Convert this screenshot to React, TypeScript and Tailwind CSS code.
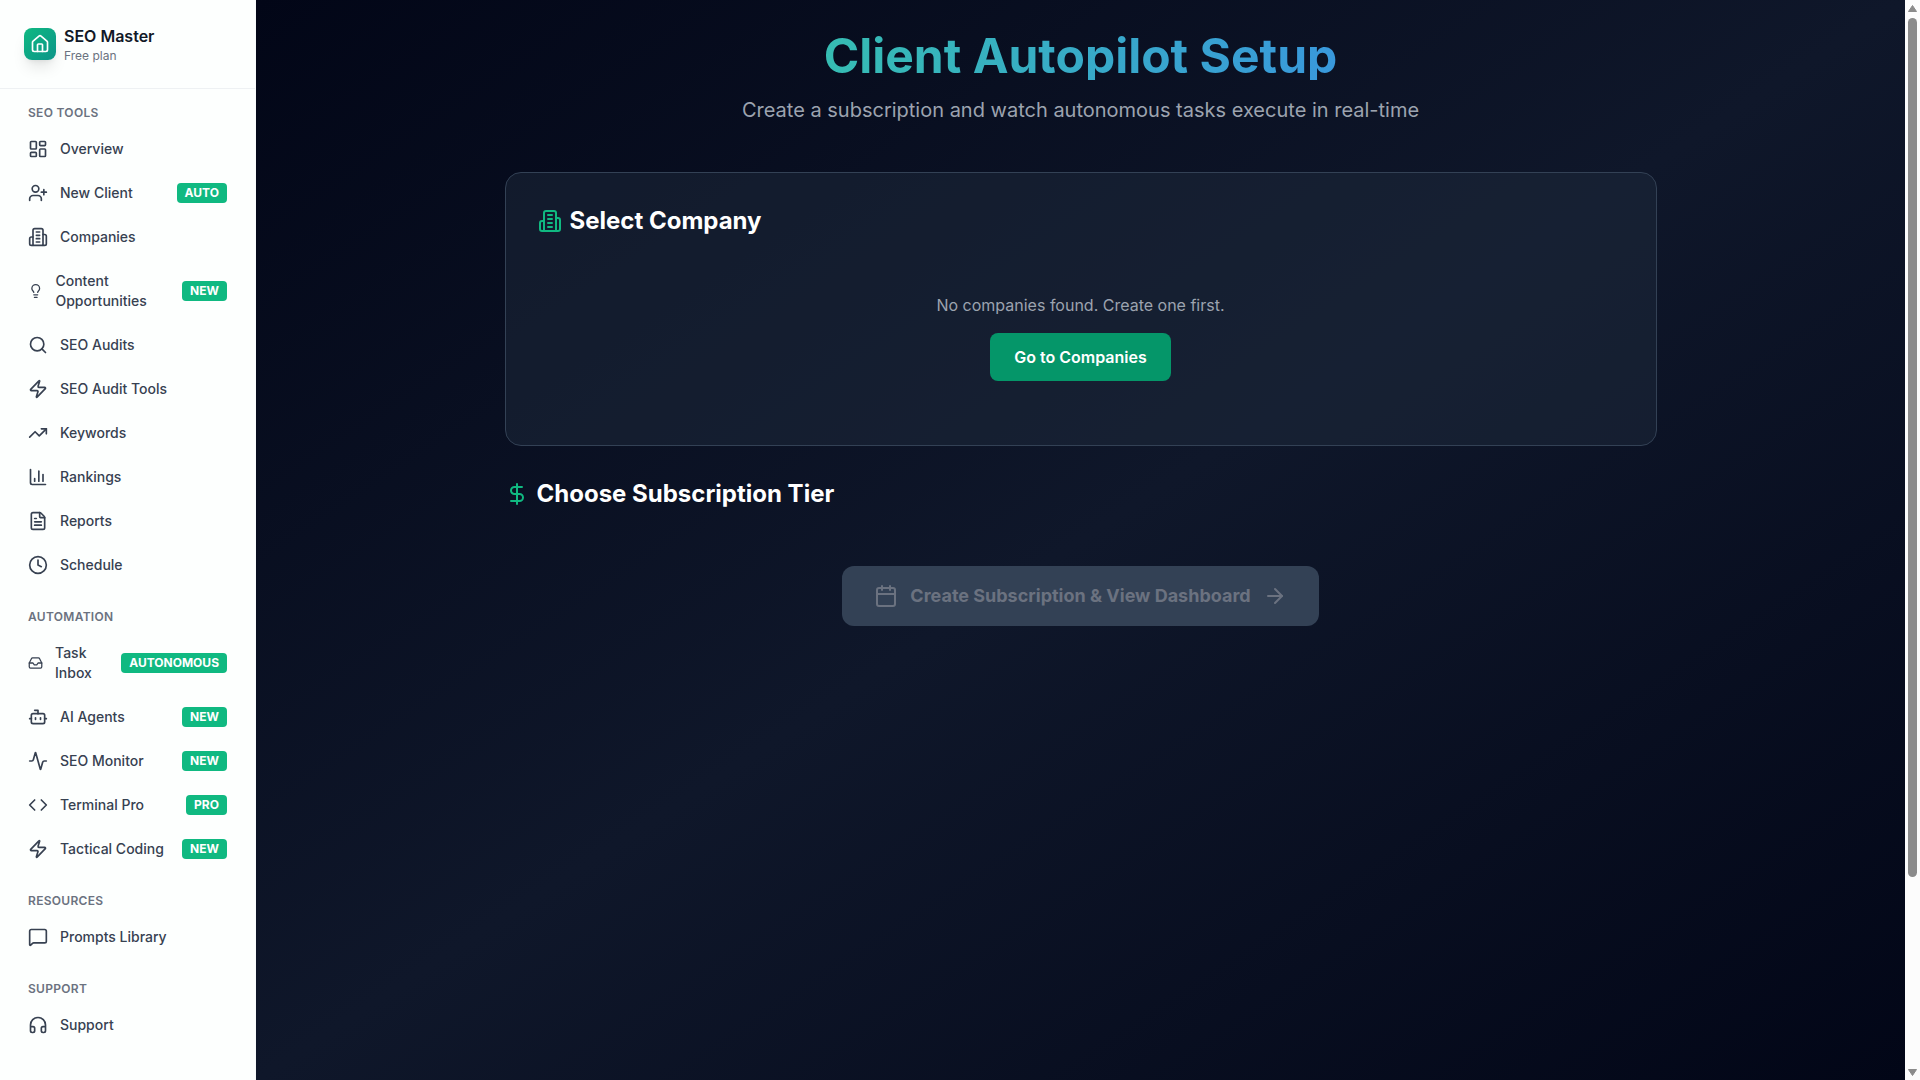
import React from "react";
import {
  Activity,
  ArrowRight,
  Bot,
  Calendar,
  ChartColumn,
  Clock,
  Code,
  DollarSign,
  FileText,
  Headphones,
  House,
  Inbox,
  LayoutDashboard,
  Lightbulb,
  MessageSquare,
  Search,
  TrendingUp,
  UserPlus,
  Zap,
} from "lucide-react";

type IconType = React.ComponentType<{ className?: string }>;

function Building({ className }: { className?: string }) {
  return (
    <svg
      className={className}
      width="24"
      height="24"
      viewBox="0 0 24 24"
      fill="none"
      stroke="currentColor"
      strokeWidth="2"
      strokeLinecap="round"
      strokeLinejoin="round"
      aria-hidden="true"
    >
      <path d="M6 22V4a2 2 0 0 1 2-2h8a2 2 0 0 1 2 2v18Z" />
      <path d="M6 12H4a2 2 0 0 0-2 2v6a2 2 0 0 0 2 2h2" />
      <path d="M18 9h2a2 2 0 0 1 2 2v9a2 2 0 0 1-2 2h-2" />
      <path d="M10 6h4" />
      <path d="M10 10h4" />
      <path d="M10 14h4" />
      <path d="M10 18h4" />
    </svg>
  );
}

type Item = { label: string; icon: IconType; badge?: string };

const sections: { title: string; items: Item[] }[] = [
  {
    title: "SEO Tools",
    items: [
      { label: "Overview", icon: LayoutDashboard },
      { label: "New Client", icon: UserPlus, badge: "AUTO" },
      { label: "Companies", icon: Building },
      { label: "Content Opportunities", icon: Lightbulb, badge: "NEW" },
      { label: "SEO Audits", icon: Search },
      { label: "SEO Audit Tools", icon: Zap },
      { label: "Keywords", icon: TrendingUp },
      { label: "Rankings", icon: ChartColumn },
      { label: "Reports", icon: FileText },
      { label: "Schedule", icon: Clock },
    ],
  },
  {
    title: "Automation",
    items: [
      { label: "Task Inbox", icon: Inbox, badge: "AUTONOMOUS" },
      { label: "AI Agents", icon: Bot, badge: "NEW" },
      { label: "SEO Monitor", icon: Activity, badge: "NEW" },
      { label: "Terminal Pro", icon: Code, badge: "PRO" },
      { label: "Tactical Coding", icon: Zap, badge: "NEW" },
    ],
  },
  { title: "Resources", items: [{ label: "Prompts Library", icon: MessageSquare }] },
  { title: "Support", items: [{ label: "Support", icon: Headphones }] },
];

function Sidebar() {
  return (
    <aside className="w-64 shrink-0 border-r border-[#f9fbfb] bg-[#fdfffe]">
      <div className="flex items-center gap-2 border-b border-[#eef1f3] p-6">
        <div className="flex size-8 items-center justify-center rounded-lg bg-linear-to-br from-[#10b981] to-[#0d9488] shadow-lg">
          <House className="size-5 text-white" />
        </div>
        <div>
          <p className="text-base font-semibold text-[#111827]">SEO Master</p>
          <p className="text-xs text-[#6b7280]">Free plan</p>
        </div>
      </div>
      <nav className="flex flex-col gap-6 px-4 pt-4" aria-label="Main">
        {sections.map((section) => (
          <section key={section.title}>
            <h2 className="mb-2 px-3 text-xs font-semibold uppercase tracking-wide text-[#6b7280]">
              {section.title}
            </h2>
            <ul className="flex flex-col gap-1">
              {section.items.map(({ label, icon: Icon, badge }) => (
                <li key={label}>
                  <a
                    href="#"
                    className="flex items-center gap-3 rounded-lg px-3 py-[10px] text-sm font-medium text-[#374151]"
                  >
                    <Icon className="size-5" />
                    <span>{label}</span>
                    {badge && (
                      <span className="ml-auto rounded bg-[#10b981] px-2 py-0.5 text-xs font-bold text-white">
                        {badge}
                      </span>
                    )}
                  </a>
                </li>
              ))}
            </ul>
          </section>
        ))}
      </nav>
    </aside>
  );
}

function Scrollbar() {
  return (
    <div className="flex w-[15px] shrink-0 flex-col items-center bg-[#fcfcfc] py-1" aria-hidden="true">
      <svg className="mt-px h-[7px] w-[9px] shrink-0" viewBox="0 0 9 7">
        <path d="M4.5 0.5 8.5 6.5H0.5Z" fill="#8b8b8b" stroke="#8b8b8b" strokeLinejoin="round" />
      </svg>
      <div className="mt-1.5 flex grow flex-col pb-5">
        <div className="w-[9px] grow-[859] rounded-full bg-[#8b8b8b]" />
        <div className="grow-[172]" />
      </div>
      <svg className="h-[7px] w-[9px] shrink-0" viewBox="0 0 9 7">
        <path d="M4.5 6.5 8.5 0.5H0.5Z" fill="#8b8b8b" stroke="#8b8b8b" strokeLinejoin="round" />
      </svg>
    </div>
  );
}

export default function App() {
  return (
    <div className="flex min-h-screen font-['Inter',sans-serif]">
      <Sidebar />
      <main className="grow bg-linear-to-br/srgb from-[#020617] via-[#0f172a] to-[#020617] py-8">
        <div className="mx-auto max-w-6xl">
          <header className="mb-12 text-center">
            <h1 className="mb-4 bg-linear-to-r/srgb from-[#34d399] to-[#3b82f6] bg-clip-text text-5xl font-bold text-transparent">
              Client Autopilot Setup
            </h1>
            <p className="text-xl text-[#9ca3af]">
              Create a subscription and watch autonomous tasks execute in real-time
            </p>
          </header>

          <section className="mb-8 rounded-2xl border border-[#334155] bg-[#1e293b]/50 p-8">
            <h2 className="mb-6 flex items-center gap-2 text-2xl font-bold text-white">
              <Building className="size-6 text-[#10b981]" />
              Select Company
            </h2>
            <div className="py-8 text-center">
              <p className="mb-4 text-base text-[#9ca3af]">No companies found. Create one first.</p>
              <button type="button" className="rounded-lg bg-[#059669] px-6 py-3 font-semibold text-white">
                Go to Companies
              </button>
            </div>
          </section>

          <section className="pb-14">
            <h2 className="flex items-center gap-2 text-2xl font-bold text-white">
              <DollarSign className="size-6 text-[#10b981]" />
              Choose Subscription Tier
            </h2>
          </section>

          <div className="flex justify-center">
            <button
              type="button"
              disabled
              className="flex items-center gap-3 rounded-xl bg-[#334155] px-8 py-4 text-lg font-bold text-[#6b7280]"
            >
              <Calendar className="size-6" />
              Create Subscription &amp; View Dashboard
              <ArrowRight className="size-6" />
            </button>
          </div>
        </div>
      </main>
      <Scrollbar />
    </div>
  );
}
